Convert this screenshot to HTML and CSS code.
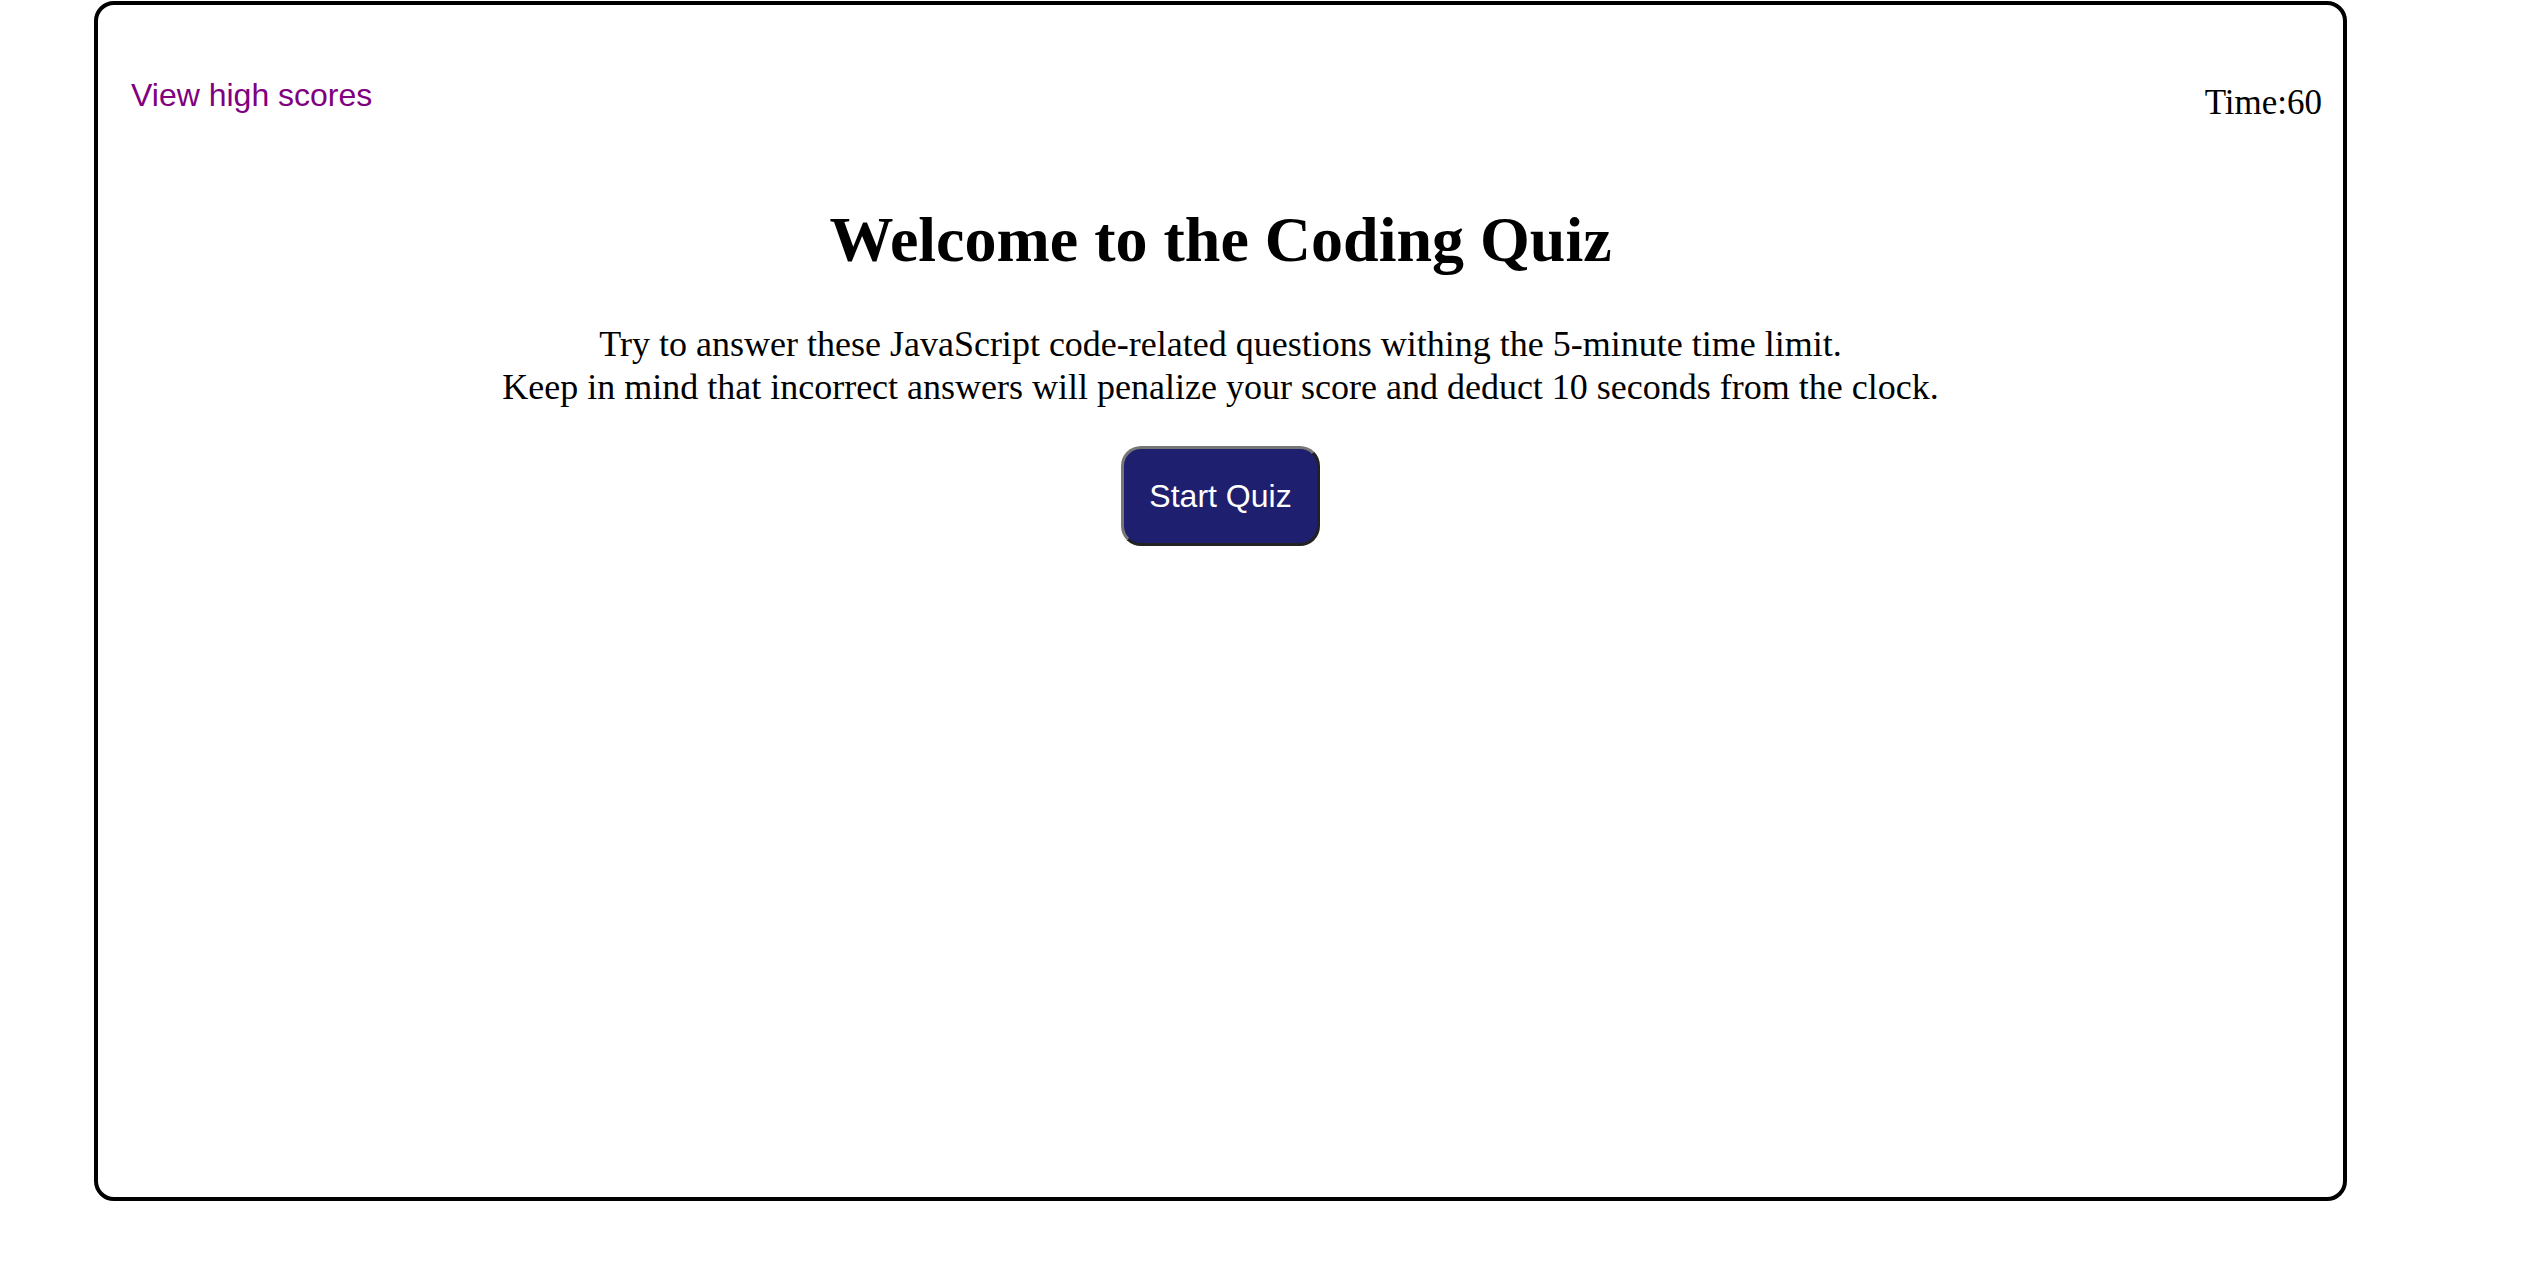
FILE: index.html
```html
<!DOCTYPE html>
<html lang="en">
<head>
<meta charset="utf-8">
<title>Coding Quiz</title>
<link rel="stylesheet" href="styles.css">
</head>
<body>
<main class="quiz">
  <header class="quiz-header">
    <a class="scores-link" href="#">View high scores</a>
    <div class="timer">Time:60</div>
  </header>
  <section class="intro">
    <h1 class="intro-title">Welcome to the Coding Quiz</h1>
    <p class="intro-text">Try to answer these JavaScript code-related questions withing the 5-minute time limit.<br>Keep in mind that incorrect answers will penalize your score and deduct 10 seconds from the clock.</p>
    <button class="start-btn" type="button">Start Quiz</button>
  </section>
</main>
</body>
</html>
```

FILE: styles.css
```css
html, body {
  margin: 0;
  padding: 0;
  background: #ffffff;
}

body {
  font-family: "Liberation Serif", "Times New Roman", serif;
  color: #000000;
}

.quiz {
  box-sizing: border-box;
  margin: 1px 0 0 94px;
  width: 2253px;
  height: 1200px;
  border: 4px solid #000000;
  border-radius: 20px;
}

.quiz-header {
  display: flex;
  justify-content: space-between;
  align-items: flex-start;
  padding: 0 21px 0 33px;
}

.scores-link {
  margin-top: 72px;
  font-family: "Liberation Sans", Arial, sans-serif;
  font-size: 32px;
  color: #800080;
  text-decoration: none;
}

.timer {
  margin-top: 78px;
  font-size: 35px;
}

.intro {
  display: flex;
  flex-direction: column;
  align-items: center;
  text-align: center;
}

.intro-title {
  margin: 80px 0 0;
  font-size: 64px;
  font-weight: bold;
}

.intro-text {
  margin: 46px 0 0;
  font-size: 36px;
  line-height: 1.2;
}

.start-btn {
  box-sizing: border-box;
  margin-top: 37px;
  width: 199px;
  height: 100px;
  display: flex;
  align-items: center;
  justify-content: center;
  background: #1f1f70;
  color: #ffffff;
  font-family: "Liberation Sans", Arial, sans-serif;
  font-size: 32px;
  border-width: 3px;
  border-style: solid;
  border-color: #767676 #222222 #222222 #767676;
  border-radius: 20px;
  cursor: pointer;
}
```
